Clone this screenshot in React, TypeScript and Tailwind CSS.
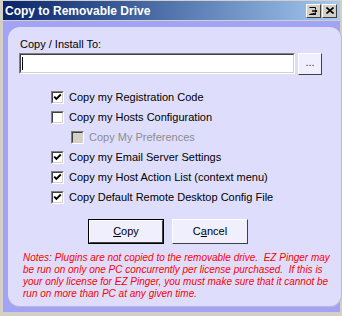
import React from 'react';

const font = { fontFamily: '"Liberation Sans", Arial, sans-serif' };

const CheckBox: React.FC<{ checked?: boolean; disabled?: boolean }> = ({ checked, disabled }) => (
  <div className="w-[13px] h-[13px] shrink-0 border border-t-[#808080] border-l-[#808080] border-b-white border-r-white">
    <div
      className={`w-full h-full border border-t-[#404040] border-l-[#404040] border-b-[#d4d0c8] border-r-[#d4d0c8] flex items-center justify-center ${
        disabled ? 'bg-[#d4d0c8]' : 'bg-white'
      }`}
    >
      {checked && (
        <svg width="9" height="9" viewBox="0 0 9 9">
          <path d="M1.2 3.6 L3.4 5.9 L7.8 1.5" fill="none" stroke="#000" strokeWidth="1.9" />
        </svg>
      )}
    </div>
  </div>
);

const Option: React.FC<{ label: string; checked?: boolean; disabled?: boolean; indent?: boolean }> = ({
  label,
  checked,
  disabled,
  indent,
}) => (
  <div className={`h-[20px] flex items-center gap-[5px] ${indent ? 'pl-[52px]' : 'pl-[32px]'}`}>
    <CheckBox checked={checked} disabled={disabled} />
    <span className={`text-[11px] leading-[13px] ${disabled ? 'text-[#8c8c8c]' : 'text-black'}`}>{label}</span>
  </div>
);

const TitleButton: React.FC<{ children: React.ReactNode }> = ({ children }) => (
  <div className="w-[15px] h-[14px] bg-[#d4d0c8] border border-t-white border-l-white border-b-[#404040] border-r-[#404040] flex items-center justify-center">
    {children}
  </div>
);

const App: React.FC = () => {
  return (
    <div className="w-[342px] h-[316px] bg-[#d4d0c8] pt-px pl-[3px] pr-[2px] pb-[4px] flex flex-col" style={font}>
      {/* Title bar */}
      <div className="h-[19px] shrink-0 flex items-center pl-[2px] pr-[3px] bg-gradient-to-r from-[#0a246a] to-[#a6caf0]">
        <span className="text-white font-bold text-[12px] leading-none">Copy to Removable Drive</span>
        <div className="ml-auto flex gap-px">
          <TitleButton>
            <svg width="9" height="8" viewBox="0 0 9 8">
              <path d="M0.5 0.5 H6.5 V2 M6.5 6 V7.5 H0.5 Z" fill="none" stroke="#000" strokeWidth="1" />
              <path d="M3 4 H7.5" stroke="#000" strokeWidth="1.4" />
              <path d="M6 2 L8.5 4 L6 6 Z" fill="#000" />
            </svg>
          </TitleButton>
          <TitleButton>
            <svg width="8" height="7" viewBox="0 0 8 7">
              <path d="M0.5 0.5 L7.5 6.5 M7.5 0.5 L0.5 6.5" stroke="#000" strokeWidth="1.6" />
            </svg>
          </TitleButton>
        </div>
      </div>

      {/* Client area */}
      <div className="mt-px flex-1 bg-[#a3a3f5] pt-[6px] pl-[5px] pr-[5px] pb-[5px] flex">
        <div className="flex-1 bg-[#dedefc] rounded-[12px] border-r border-b border-[#b8b8d8] flex flex-col pt-[11px] px-[11px]">
          <div className="ml-px text-[11px] leading-[13px] text-black">Copy / Install To:</div>

          <div className="mt-[2px] flex items-start gap-[3px]">
            <div className="w-[276px] h-[21px] bg-white border border-t-[#808080] border-l-[#808080] border-b-white border-r-white">
              <div className="w-full h-full border border-t-[#404040] border-l-[#404040] border-b-[#d4d0c8] border-r-[#d4d0c8] pl-[1px] pt-[2px]">
                <div className="w-px h-[13px] bg-black" />
              </div>
            </div>
            <div className="w-[24px] h-[22px] bg-[#efeffd] border border-t-white border-l-white border-b-[#404040] border-r-[#404040] flex items-center justify-center">
              <span className="text-[11px] leading-none text-[#3a2a6a] -mt-[3px]">...</span>
            </div>
          </div>

          <div className="mt-[12px] flex flex-col">
            <Option label="Copy my Registration Code" checked />
            <Option label="Copy my Hosts Configuration" />
            <Option label="Copy My Preferences" disabled indent />
            <Option label="Copy my Email Server Settings" checked />
            <Option label="Copy my Host Action List (context menu)" checked />
            <Option label="Copy Default Remote Desktop Config File" checked />
          </div>

          <div className="mt-[12px] ml-[69px] flex gap-[8px]">
            <div className="w-[76px] h-[25px] border border-black">
              <div className="w-full h-full bg-[#efeffd] border border-t-white border-l-white border-b-[#404040] border-r-[#404040] flex items-center justify-center text-[11px] text-black">
                <span>
                  <span className="underline">C</span>opy
                </span>
              </div>
            </div>
            <div className="w-[76px] h-[25px] bg-[#efeffd] border border-t-white border-l-white border-b-[#404040] border-r-[#404040] flex items-center justify-center text-[11px] text-black">
              <span>
                C<span className="underline">a</span>ncel
              </span>
            </div>
          </div>

          <div className="mt-[8px] pl-[4px] text-[10px] leading-[12px] italic text-[#ff0000] whitespace-nowrap">
            <div>Notes: Plugins are not copied to the removable drive.&nbsp; EZ Pinger may</div>
            <div>be run on only one PC concurrently per license purchased.&nbsp; If this is</div>
            <div>your only license for EZ Pinger, you must make sure that it cannot be</div>
            <div>run on more than PC at any given time.</div>
          </div>
        </div>
      </div>
    </div>
  );
};

export default App;
